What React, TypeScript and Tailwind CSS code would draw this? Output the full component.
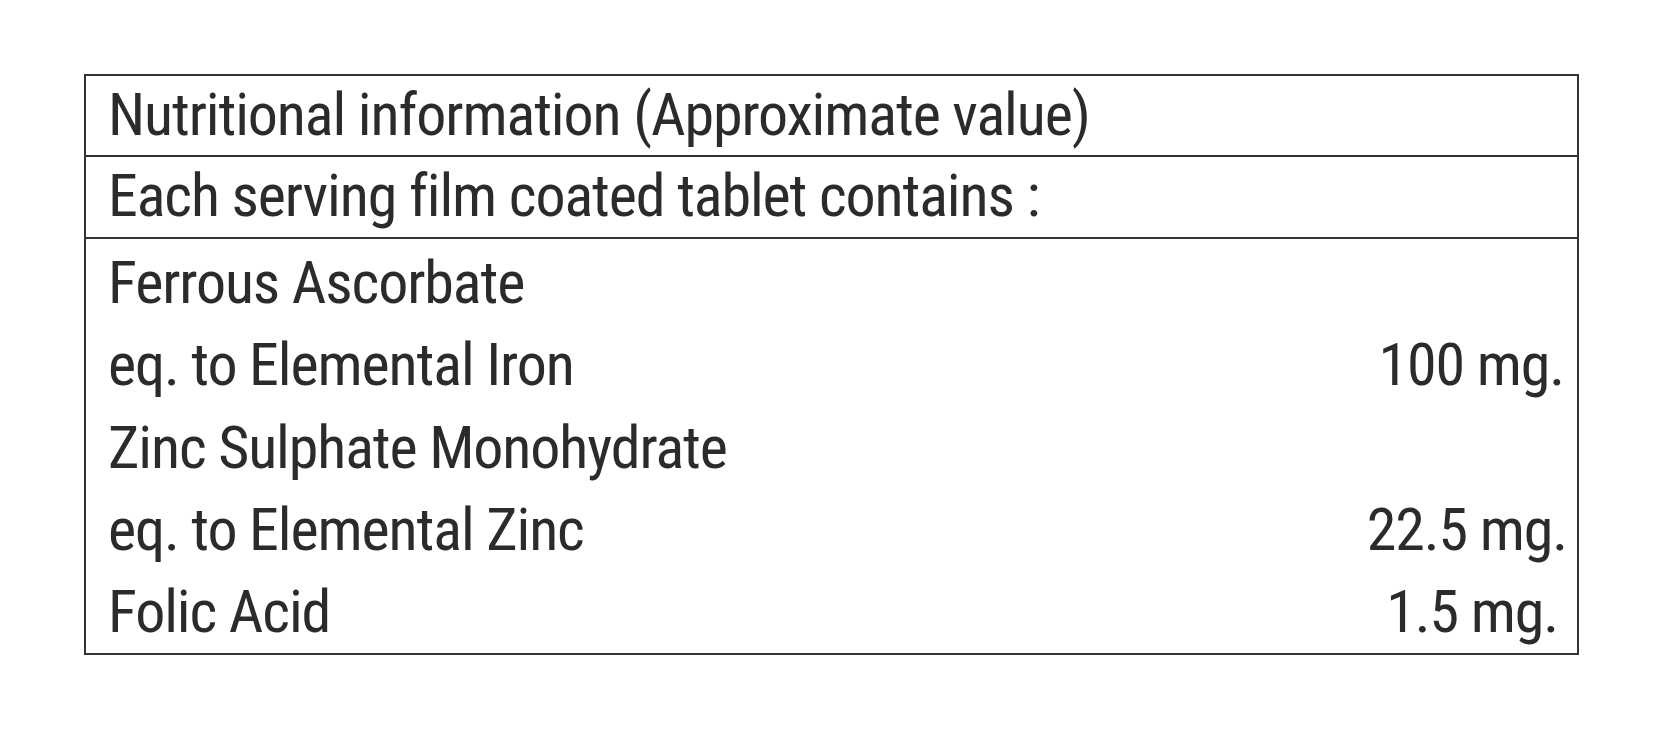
const rows = [
  { name: 'Ferrous Ascorbate', value: '', pr: 'pr-[13px]' },
  { name: 'eq. to Elemental Iron', value: '100 mg.', pr: 'pr-[13px]' },
  { name: 'Zinc Sulphate Monohydrate', value: '', pr: 'pr-[13px]' },
  { name: 'eq. to Elemental Zinc', value: '22.5 mg.', pr: 'pr-[10px]' },
  { name: 'Folic Acid', value: '1.5 mg.', pr: 'pr-[19px]' },
];

export default function App() {
  return (
    <div className="min-h-[730px] w-full bg-white pt-[74px] pl-[84px] font-['Roboto',sans-serif] font-stretch-75% tracking-[-1.1px] text-[#2b2b2b]">
      <div className="w-[1495px] border-2 border-[#333333]">
        {/* Title */}
        <div className="h-[81px] border-b-2 border-[#333333] pl-[22px] text-[60px] leading-[77px]">
          Nutritional information (Approximate value)
        </div>

        {/* Subtitle */}
        <div className="h-[82px] border-b-2 border-[#333333] pl-[22px] text-[60px] leading-[78px]">
          Each serving film coated tablet contains :
        </div>

        {/* Ingredients */}
        <div className="pt-[3px] text-[60px] leading-[82.3px]">
          {rows.map((row) => (
            <div key={row.name} className={`flex justify-between pl-[22px] ${row.pr}`}>
              <span>{row.name}</span>
              <span>{row.value}</span>
            </div>
          ))}
        </div>
      </div>
    </div>
  );
}
